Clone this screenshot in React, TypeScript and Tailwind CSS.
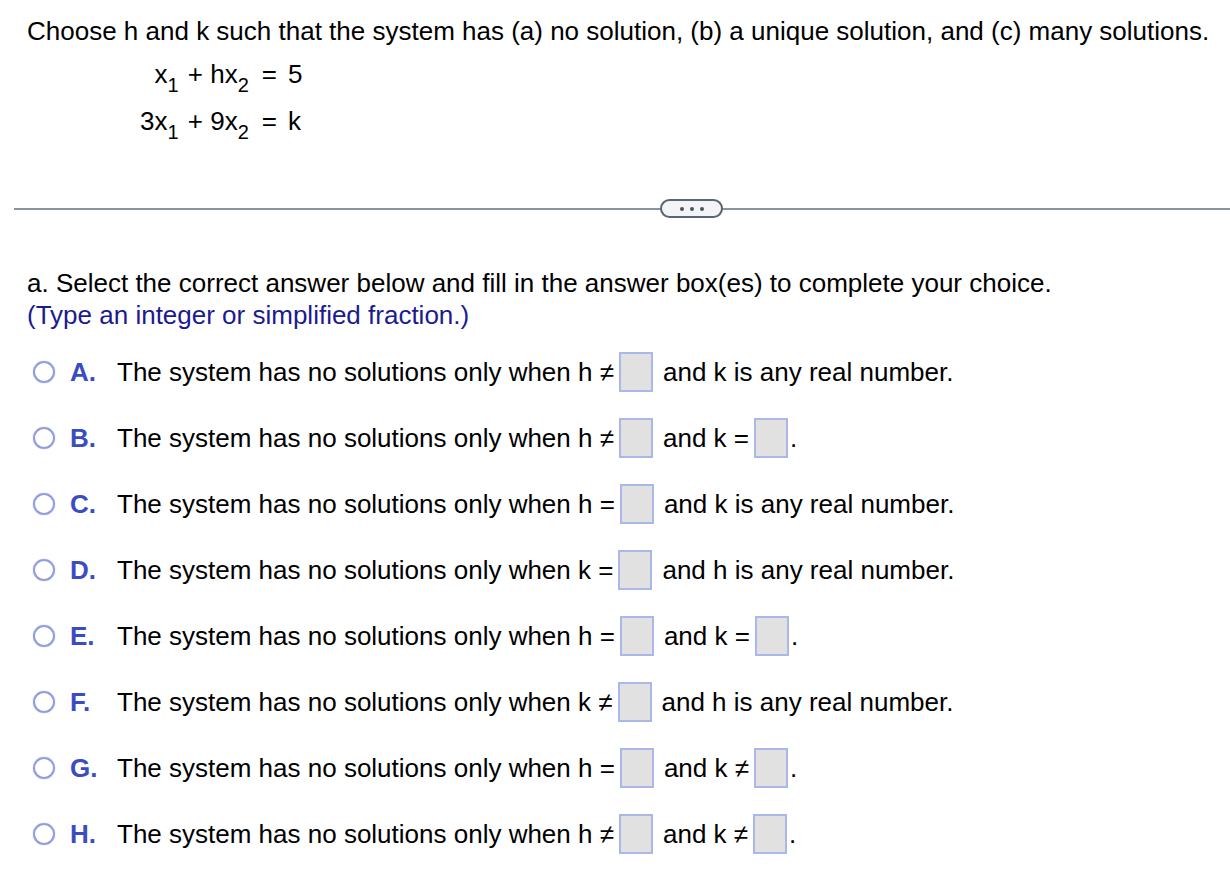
import React from "react";

type Part = { t: "text"; v: string } | { t: "box" };

interface Option {
  letter: string;
  parts: Part[];
}

const opts: Option[] = [
  { letter: "A.", parts: [{ t: "text", v: "The system has no solutions only when h \u2260" }, { t: "box" }, { t: "text", v: "and k is any real number." }] },
  { letter: "B.", parts: [{ t: "text", v: "The system has no solutions only when h \u2260" }, { t: "box" }, { t: "text", v: "and k =" }, { t: "box" }, { t: "text", v: "." }] },
  { letter: "C.", parts: [{ t: "text", v: "The system has no solutions only when h =" }, { t: "box" }, { t: "text", v: "and k is any real number." }] },
  { letter: "D.", parts: [{ t: "text", v: "The system has no solutions only when k =" }, { t: "box" }, { t: "text", v: "and h is any real number." }] },
  { letter: "E.", parts: [{ t: "text", v: "The system has no solutions only when h =" }, { t: "box" }, { t: "text", v: "and k =" }, { t: "box" }, { t: "text", v: "." }] },
  { letter: "F.", parts: [{ t: "text", v: "The system has no solutions only when k \u2260" }, { t: "box" }, { t: "text", v: "and h is any real number." }] },
  { letter: "G.", parts: [{ t: "text", v: "The system has no solutions only when h =" }, { t: "box" }, { t: "text", v: "and k \u2260" }, { t: "box" }, { t: "text", v: "." }] },
  { letter: "H.", parts: [{ t: "text", v: "The system has no solutions only when h \u2260" }, { t: "box" }, { t: "text", v: "and k \u2260" }, { t: "box" }, { t: "text", v: "." }] },
];

function Sub({ children }: { children: React.ReactNode }) {
  return <span className="relative top-[9px] text-[20px]">{children}</span>;
}

function AnswerBox({ tight }: { tight: boolean }) {
  return (
    <span
      className={
        tight
          ? "ml-[5px] mr-[2px] inline-block h-[40px] w-[34px] border-2 border-[#a9b7e9] bg-[#e1e1e1]"
          : "ml-[5px] mr-[10px] inline-block h-[40px] w-[34px] border-2 border-[#a9b7e9] bg-[#e1e1e1]"
      }
    />
  );
}

export default function App() {
  return (
    <div className="min-h-screen bg-white text-black" style={{ fontFamily: '"Liberation Sans", Arial, sans-serif' }}>
      <div className="pl-[27px] pt-[16px] text-[26px] leading-[30px]">
        Choose h and k such that the system has (a) no solution, (b) a unique solution, and (c) many solutions.
      </div>

      <table className="ml-[140px] mt-[5px] text-[26px]">
        <tbody>
          <tr className="h-[47px]">
            <td className="text-right">
              x<Sub>1</Sub> <span className="ml-[2px]">+</span> hx<Sub>2</Sub>
            </td>
            <td className="pl-[13px] pr-[11px]">=</td>
            <td>5</td>
          </tr>
          <tr className="h-[47px]">
            <td className="text-right">
              3x<Sub>1</Sub> <span className="ml-[2px]">+</span> 9x<Sub>2</Sub>
            </td>
            <td className="pl-[13px] pr-[11px]">=</td>
            <td>k</td>
          </tr>
        </tbody>
      </table>

      <div className="relative mt-[63px] ml-[14px] h-[2px] bg-[#8a94a1]">
        <div className="absolute left-[646px] top-[-9px] flex h-[19px] w-[63px] items-center justify-center gap-[6px] rounded-full border-2 border-[#5b6472] bg-[#f3f4f6]">
          <span className="h-[4px] w-[4px] rounded-full bg-[#4b5360]" />
          <span className="h-[4px] w-[4px] rounded-full bg-[#4b5360]" />
          <span className="h-[4px] w-[4px] rounded-full bg-[#4b5360]" />
        </div>
      </div>

      <div className="mt-[57px] pl-[27px] text-[26px] leading-[32px]">
        <div>a. Select the correct answer below and fill in the answer box(es) to complete your choice.</div>
        <div className="text-[#1b1b8f]">(Type an integer or simplified fraction.)</div>
      </div>

      <div className="mt-[8px]">
        {opts.map((o) => (
          <div key={o.letter} className="flex h-[66px] items-center text-[26px]">
            <span className="ml-[33px] h-[22px] w-[22px] rounded-full border-2 border-[#8f9ce2] shadow-[0_0_1px_#8f9ce2]" />
            <span className="ml-[15px] w-[47px] font-bold text-[#3b4cc0]">{o.letter}</span>
            {o.parts.map((p, i) => {
              if (p.t === "box") {
                const next = o.parts[i + 1];
                return <AnswerBox key={i} tight={!!next && next.t === "text" && next.v === "."} />;
              }
              return <span key={i}>{p.v}</span>;
            })}
          </div>
        ))}
      </div>
    </div>
  );
}
